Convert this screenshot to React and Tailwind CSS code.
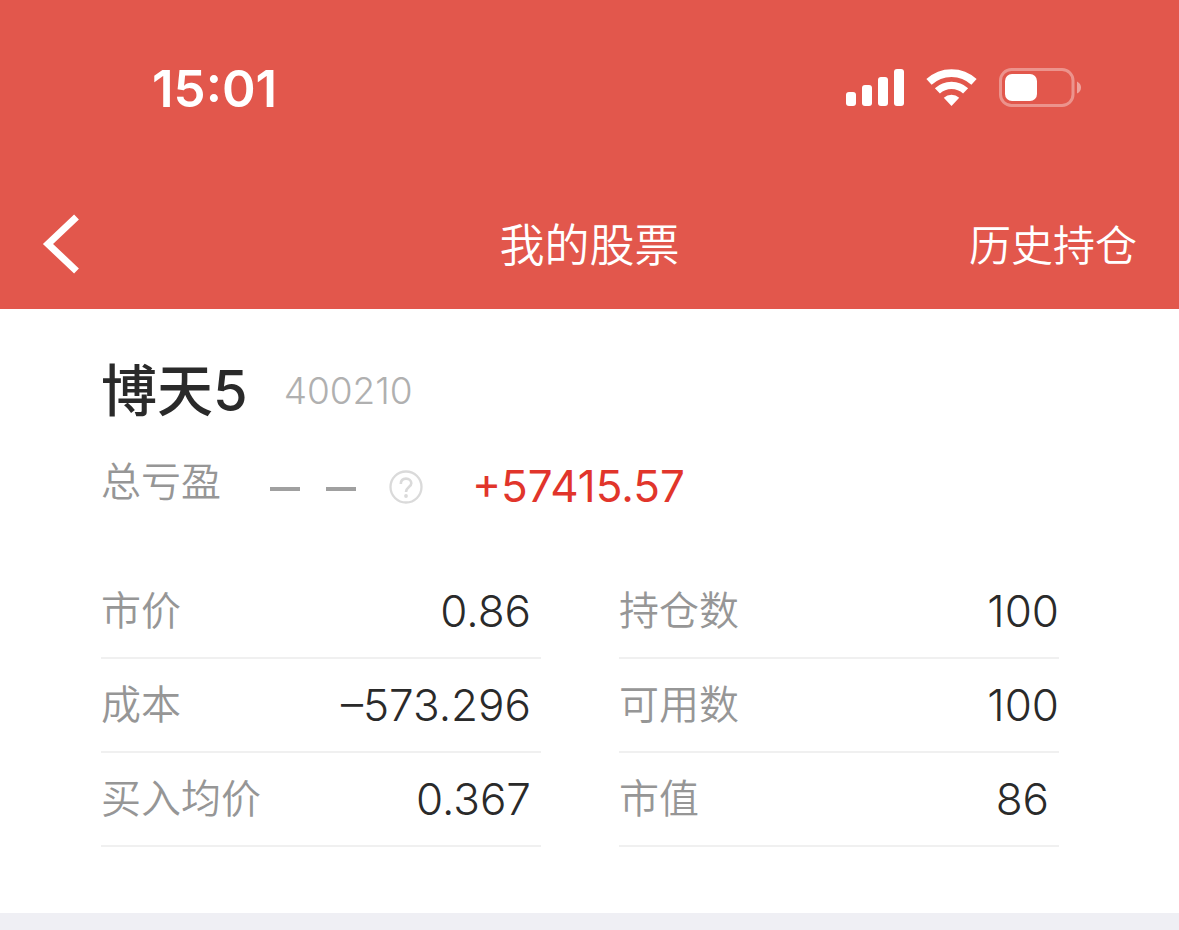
function StatusIcons() {
  return (
    <div className="flex items-center text-white">
      <svg width="60" height="38" viewBox="0 0 60 38" fill="currentColor" aria-hidden="true">
        <rect x="1" y="23" width="10" height="14" rx="3" />
        <rect x="17" y="16" width="10" height="21" rx="3" />
        <rect x="33" y="8" width="10" height="29" rx="3" />
        <rect x="49" y="0" width="10" height="37" rx="3" />
      </svg>
      <svg className="ml-5" width="54" height="38" viewBox="0 0 54 38" fill="none" stroke="currentColor" aria-hidden="true">
        <path d="M4 12.900A33 33 0 0 1 49 12.900" strokeWidth="7.700" />
        <path d="M12.400 21.900A20.700 20.700 0 0 1 40.600 21.900" strokeWidth="7.400" />
        <path d="M18.800 28.700A11.300 11.300 0 0 1 34.200 28.700L26.500 37Z" fill="currentColor" stroke="none" />
      </svg>
      <svg className="ml-5" width="84" height="40" viewBox="0 0 84 40" fill="none" aria-hidden="true">
        <rect x="1.500" y="1.500" width="72.500" height="36" rx="11" stroke="currentColor" strokeOpacity=".36" strokeWidth="3" />
        <rect x="6" y="6" width="32" height="27" rx="7" fill="currentColor" />
        <path d="M78 13.500Q82 15.500 82 19.500Q82 23.500 78 25.500Z" fill="currentColor" fillOpacity=".45" />
      </svg>
    </div>
  );
}

const columns = [
  [
    { label: "市价", value: "0.86", inset: true },
    { label: "成本", value: "–573.296", inset: true },
    { label: "买入均价", value: "0.367", inset: true },
  ],
  [
    { label: "持仓数", value: "100" },
    { label: "可用数", value: "100" },
    { label: "市值", value: "86", inset: true },
  ],
];

function HelpButton() {
  return (
    <button type="button" aria-label="说明" className="ml-8 pt-0.5 text-[#dadada]">
      <svg width="36" height="36" viewBox="0 0 36 36" fill="none" stroke="currentColor" aria-hidden="true">
        <circle cx="18" cy="18" r="15.500" strokeWidth="2.300" />
        <path d="M12.800 15C12.800 11.500 15 9.600 18 9.600S23.300 11.500 23.300 14.300C23.300 18 18 18.300 18 23" strokeWidth="2.600" />
        <circle cx="18" cy="27" r="1.900" fill="currentColor" stroke="none" />
      </svg>
    </button>
  );
}

export default function App() {
  return (
    <div className="flex min-h-screen flex-col bg-white font-['Inter','Noto_Sans_CJK_SC',sans-serif] text-[#2a2a2a]">
      <header className="bg-[#e2574c] text-white">
        <div className="flex h-44 items-center justify-between pr-24 pl-[152px]">
          <time className="text-[51px] leading-none font-semibold">15:01</time>
          <StatusIcons />
        </div>
        <nav className="grid h-[133px] grid-cols-3 items-center px-[42px] pt-0.5 font-[350]">
          <button type="button" aria-label="返回" className="justify-self-start">
            <svg width="38" height="62" viewBox="0 0 38 62" fill="none" stroke="currentColor" strokeWidth="7" aria-hidden="true">
              <path d="M34.500 4L6 31L34.500 58" />
            </svg>
          </button>
          <h1 className="justify-self-center pt-1 text-[45px] leading-[48px]">我的股票</h1>
          <a href="#history" className="justify-self-end pt-1 text-[42px] leading-[48px]">历史持仓</a>
        </nav>
      </header>
      <main className="pt-12 pr-[120px] pb-[66px] pl-[101px]">
        <div className="flex items-center gap-9">
          <h2 className="text-[56px] leading-[68px] font-medium">博天5</h2>
          <span className="text-[37px] font-light text-[#b0b0b0]">400210</span>
        </div>
        <div className="mb-[18px] flex h-[122px] items-center">
          <span className="pb-2 text-[40px] font-[350] text-[#969696]">总亏盈</span>
          <span role="img" aria-label="无数据" className="ml-[49px] flex gap-[26px] pt-1.5">
            <span className="h-1 w-[30px] bg-[#a0a0a0]" />
            <span className="h-1 w-[30px] bg-[#a0a0a0]" />
          </span>
          <HelpButton />
          <strong className="ml-12 text-[44px] font-[370] text-[#e1352b]">+57415.57</strong>
        </div>
        <div className="grid grid-cols-2 gap-[78px]">
          {columns.map((rows) => (
            <dl key={rows[0].label}>
              {rows.map((row) => (
                <div key={row.label} className="flex h-[94px] items-center justify-between border-b-2 border-[#f0f0f0] font-[350]">
                  <dt className="text-[40px] text-[#969696]">{row.label}</dt>
                  <dd className={row.inset ? "pr-2.5 text-[44px]" : "text-[44px]"}>{row.value}</dd>
                </div>
              ))}
            </dl>
          ))}
        </div>
      </main>
      <div className="min-h-4 flex-1 bg-[#efeff4]" />
    </div>
  );
}
